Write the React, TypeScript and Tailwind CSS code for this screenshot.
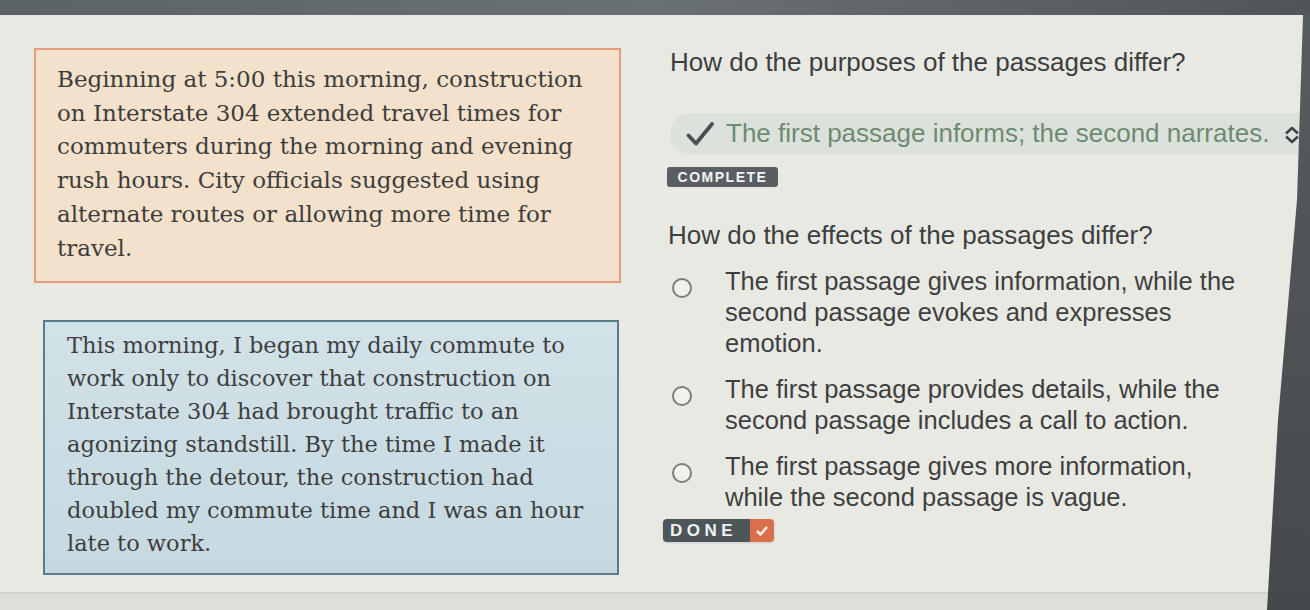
import React from 'react';

const SERIF = { fontFamily: '"DejaVu Serif", Georgia, serif' };

function CheckMark() {
  return (
    <svg width="30" height="26" viewBox="0 0 30 26" fill="none">
      <path d="M3.5 14.5 L11 22.5 L27 3" stroke="#4a5052" strokeWidth="3.8" strokeLinecap="round" strokeLinejoin="round" />
    </svg>
  );
}

function UpDown() {
  return (
    <svg width="18" height="20" viewBox="0 0 18 20" fill="none">
      <path d="M3 8.5 L9 3 L15 8.5" stroke="#3f4446" strokeWidth="2.6" strokeLinejoin="round" />
      <path d="M3 11.5 L9 17 L15 11.5" stroke="#3f4446" strokeWidth="2.6" strokeLinejoin="round" />
    </svg>
  );
}

function Option({ lines }: { lines: string[] }) {
  return (
    <div className="flex items-start ml-[11px]">
      <div className="w-[20px] h-[20px] rounded-full border-2 border-[#7b7d7c] bg-[#f1f1ee] mt-[12px] shrink-0" />
      <div className="ml-[33px] text-[25.5px] leading-[31px] text-[#3e3f3f]">
        {lines.map((l) => (
          <div key={l} className="whitespace-nowrap">{l}</div>
        ))}
      </div>
    </div>
  );
}

export default function App() {
  const first = [
    'Beginning at 5:00 this morning, construction',
    'on Interstate 304 extended travel times for',
    'commuters during the morning and evening',
    'rush hours. City officials suggested using',
    'alternate routes or allowing more time for',
    'travel.',
  ];
  const second = [
    'This morning, I began my daily commute to',
    'work only to discover that construction on',
    'Interstate 304 had brought traffic to an',
    'agonizing standstill. By the time I made it',
    'through the detour, the construction had',
    'doubled my commute time and I was an hour',
    'late to work.',
  ];

  return (
    <div
      className="relative w-[1310px] h-[610px] overflow-hidden bg-[#e9e9e4] flex flex-col"
      style={{ fontFamily: '"Liberation Sans", Arial, sans-serif' }}
    >
      <div className="h-[15px] shrink-0 bg-gradient-to-r from-[#5c6366] via-[#6a7174] to-[#4f5558]" />

      <div className="h-[577px] shrink-0 flex">
        {/* passages */}
        <div className="w-[621px] shrink-0 pt-[33px] flex flex-col" style={SERIF}>
          <div className="ml-[34px] w-[587px] h-[235px] bg-[#f3e1cb] border-2 border-[#e59c7c] pl-[21px] pt-[13px] text-[23px] leading-[33.7px] text-[#3d3d3b]">
            {first.map((l) => (
              <div key={l} className="whitespace-nowrap">{l}</div>
            ))}
          </div>
          <div className="mt-[37px] ml-[43px] w-[576px] h-[255px] bg-gradient-to-b from-[#d1e2e8] to-[#c6d9e0] border-2 border-[#597b8c] pl-[22px] pt-[7px] text-[22.5px] leading-[33px] text-[#3d3e3e]">
            {second.map((l) => (
              <div key={l} className="whitespace-nowrap">{l}</div>
            ))}
          </div>
        </div>

        {/* questions */}
        <div className="flex-1 pl-[40px] pt-[32px] flex flex-col items-start">
          <div className="ml-[9px] text-[26px] leading-[30px] text-[#3d3e3e] whitespace-nowrap">
            How do the purposes of the passages differ?
          </div>

          <div className="mt-[36px] ml-[9px] self-stretch h-[41px] rounded-l-[21px] bg-[#dde1db] flex items-center pl-[15px]">
            <CheckMark />
            <span className="ml-[11px] text-[26px] text-[#6c8b72] whitespace-nowrap">
              The first passage informs; the second narrates.
            </span>
            <span className="ml-[14px] mt-[2px]">
              <UpDown />
            </span>
          </div>

          <div className="mt-[13px] ml-[6px] h-[20px] w-[111px] rounded-[3px] bg-[#585e61] flex items-center justify-center text-[14px] font-bold tracking-[1.5px] text-[#f4f4f4]">
            COMPLETE
          </div>

          <div className="mt-[33px] ml-[7px] text-[26px] leading-[30px] text-[#3d3e3e] whitespace-nowrap">
            How do the effects of the passages differ?
          </div>

          <div className="mt-[16px] flex flex-col gap-[15px]">
            <Option lines={['The first passage gives information, while the', 'second passage evokes and expresses', 'emotion.']} />
            <Option lines={['The first passage provides details, while the', 'second passage includes a call to action.']} />
            <Option lines={['The first passage gives more information,', 'while the second passage is vague.']} />
          </div>

          <div className="mt-[6px] ml-[2px] h-[23px] rounded-[4px] overflow-hidden flex items-stretch shadow-sm">
            <div className="w-[87px] bg-[#4d5659] pl-[7px] flex items-center text-[17px] font-bold tracking-[4.5px] text-[#f2f2f2]">
              DONE
            </div>
            <div className="w-[24px] bg-[#d9704c] flex items-center justify-center">
              <svg width="14" height="12" viewBox="0 0 14 12" fill="none">
                <path d="M2 6 L5.5 9.5 L12 2" stroke="#fbe9dd" strokeWidth="2.6" strokeLinejoin="round" />
              </svg>
            </div>
          </div>
        </div>
      </div>

      <div className="flex-1 border-t-2 border-[#d2d2ce] bg-[#dedeDA]" />

      {/* dark edge of the display */}
      <div className="absolute right-0 top-[15px] bottom-0 w-[43px] bg-gradient-to-b from-[#575c5e] to-[#45494b] [clip-path:polygon(36px_0,100%_0,100%_100%,0_100%,11px_405px,30px_185px)]" />
    </div>
  );
}
